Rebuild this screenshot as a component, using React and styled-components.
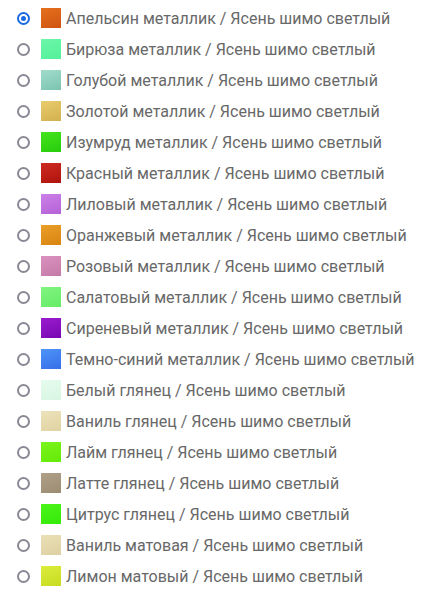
import React, { useState } from 'react';
import styled, { createGlobalStyle } from 'styled-components';

const GlobalStyle = createGlobalStyle`
  body {
    margin: 0;
    background: #ffffff;
    font-family: Roboto, "Liberation Sans", Arial, sans-serif;
  }
`;

const colors = [
  { name: 'Апельсин металлик', from: '#e4701e', to: '#cf5410' },
  { name: 'Бирюза металлик', from: '#6af7a8', to: '#55f09a' },
  { name: 'Голубой металлик', from: '#a2dccb', to: '#7bc4b0' },
  { name: 'Золотой металлик', from: '#e8cc6c', to: '#d2b04e' },
  { name: 'Изумруд металлик', from: '#44e41c', to: '#28cc0c' },
  { name: 'Красный металлик', from: '#cc2a20', to: '#b0140e' },
  { name: 'Лиловый металлик', from: '#cc80e8', to: '#b462d6' },
  { name: 'Оранжевый металлик', from: '#eaa028', to: '#d88410' },
  { name: 'Розовый металлик', from: '#dc92c0', to: '#c47aa6' },
  { name: 'Салатовый металлик', from: '#80f480', to: '#66ec66' },
  { name: 'Сиреневый металлик', from: '#9a1cd0', to: '#7808b0' },
  { name: 'Темно-синий металлик', from: '#4c94f8', to: '#386ee8' },
  { name: 'Белый глянец', from: '#e6fbee', to: '#d8f6e2' },
  { name: 'Ваниль глянец', from: '#ece2ba', to: '#e0d2a2' },
  { name: 'Лайм глянец', from: '#7cf41a', to: '#64ea08' },
  { name: 'Латте глянец', from: '#b0a088', to: '#9c8c72' },
  { name: 'Цитрус глянец', from: '#4cf41a', to: '#34ea08' },
  { name: 'Ваниль матовая', from: '#eadfb6', to: '#ddd0a2' },
  { name: 'Лимон матовый', from: '#dcec3c', to: '#c6dc20' },
];

const App = () => {
  const [selected, setSelected] = useState(0);

  return (
    <>
      <GlobalStyle />
      <List>
        {colors.map((c, i) => (
          <Row key={c.name} onClick={() => setSelected(i)}>
            <Radio checked={selected === i} />
            <Swatch from={c.from} to={c.to} />
            <Label>{c.name} / Ясень шимо светлый</Label>
          </Row>
        ))}
      </List>
    </>
  );
};

const List = styled.div`
  display: flex;
  flex-direction: column;
  padding: 2.5px 0 0 17px;
`;

const Row = styled.label`
  display: flex;
  align-items: center;
  height: 31px;
  cursor: pointer;
`;

const Radio = styled.span`
  box-sizing: border-box;
  width: 13px;
  height: 13px;
  border-radius: 50%;
  border: 2px solid ${(p) => (p.checked ? '#1a6be0' : '#8a8894')};
  margin-right: 11px;
  flex-shrink: 0;
  display: flex;
  align-items: center;
  justify-content: center;
  &::after {
    content: '';
    display: ${(p) => (p.checked ? 'block' : 'none')};
    width: 5px;
    height: 5px;
    border-radius: 50%;
    background: #1a6be0;
  }
`;

const Swatch = styled.span`
  width: 20px;
  height: 20px;
  flex-shrink: 0;
  margin-right: 5px;
  background: linear-gradient(160deg, ${(p) => p.from}, ${(p) => p.to});
`;

const Label = styled.span`
  font-size: 16px;
  color: #686868;
  white-space: nowrap;
`;

export default App;
